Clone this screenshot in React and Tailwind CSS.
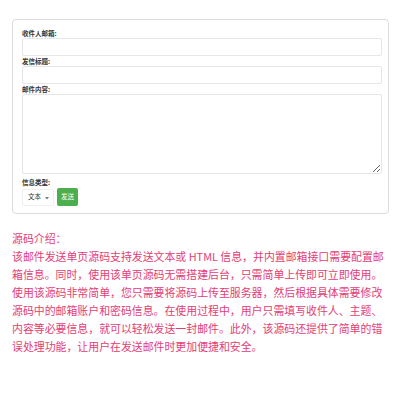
import { useState } from 'react';

const FONT = { fontFamily: '"Noto Sans CJK SC", "Noto Sans", sans-serif' };

function Field({ label, children }) {
  return (
    <div>
      <label className="block text-[6.5px] leading-[10px] font-bold text-[#333]">{label}</label>
      {children}
    </div>
  );
}

export default function App() {
  const [type, setType] = useState('text');

  return (
    <div className="w-[400px] h-[400px] bg-white pt-[19px] px-[12px]" style={FONT}>
      <form className="w-[377px] border border-[#dcdcdc] rounded-[4px] pt-[8px] pb-[7px] pl-[9px] pr-[8px]">
        <Field label="收件人邮箱:">
          <input type="text" className="block w-[360px] h-[18px] border border-[#e6e6e6] rounded-[2px] outline-none" />
        </Field>
        <Field label="发信标题:">
          <input type="text" className="block w-[360px] h-[18px] border border-[#e6e6e6] rounded-[2px] outline-none" />
        </Field>
        <Field label="邮件内容:">
          <textarea className="block w-[360px] h-[80px] border border-[#e6e6e6] rounded-[2px] outline-none mb-[3px]" />
        </Field>
        <Field label="信息类型:">
          <div className="flex items-center gap-[3px] mt-[1px]">
            <div className="relative w-[32px] h-[17px] border border-[#f0f0f0] rounded-[2px] bg-white flex items-center pl-[5px]">
              <span className="text-[6.5px] text-[#333]">{type === 'text' ? '文本' : 'HTML'}</span>
              <svg className="absolute right-[4px] top-[7px]" width="4" height="3" viewBox="0 0 4 3">
                <path d="M0 0 L2 2.5 L4 0 Z" fill="#777" />
              </svg>
            </div>
            <button
              type="button"
              onClick={() => setType(type === 'text' ? 'html' : 'text')}
              className="w-[21px] h-[18px] bg-[#4cae4c] rounded-[2px] text-white text-[6.5px] flex items-center justify-center"
            >
              发送
            </button>
          </div>
        </Field>
      </form>

      <div className="mt-[15px] w-[372px] text-[10.9px] leading-[18px] text-[#e33d74]">
        <p>源码介绍：</p>
        <p>
          该邮件发送单页源码支持发送文本或 HTML 信息，并内置邮箱接口需要配置邮箱信息。同时，使用该单页源码无需搭建后台，只需简单上传即可立即使用。使用该源码非常简单，您只需要将源码上传至服务器，然后根据具体需要修改源码中的邮箱账户和密码信息。在使用过程中，用户只需填写收件人、主题、内容等必要信息，就可以轻松发送一封邮件。此外，该源码还提供了简单的错误处理功能，让用户在发送邮件时更加便捷和安全。
        </p>
      </div>
    </div>
  );
}
